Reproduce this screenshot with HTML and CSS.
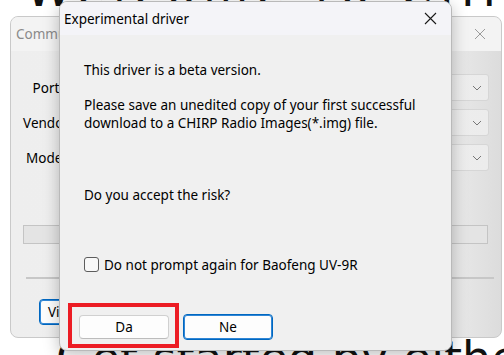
FILE: index.html
```html
<!DOCTYPE html>
<html lang="en">
<head>
  <meta charset="UTF-8" />
  <meta name="viewport" content="width=device-width, initial-scale=1" />
  <title>Experimental driver</title>
  <link rel="stylesheet" href="styles.css">
</head>
<body>
  <div class="page-text page-top">Welcome to CHIRP</div>
  <div class="page-text page-bottom">Get started by either:</div>

  <div class="window main-window">
    <div class="titlebar">
      <span class="title">Communications</span>
      <svg class="close" width="12" height="12" viewBox="0 0 12 12"><path d="M1 1L11 11M11 1L1 11" stroke="#9a9a9a" stroke-width="1"/></svg>
    </div>
    <div class="main-body">
      <div class="form-row"><label>Port</label><div class="combo"><svg width="10" height="6" viewBox="0 0 10 6"><path d="M1 1L5 5L9 1" fill="none" stroke="#777" stroke-width="1"/></svg></div></div>
      <div class="form-row"><label>Vendor</label><div class="combo"><svg width="10" height="6" viewBox="0 0 10 6"><path d="M1 1L5 5L9 1" fill="none" stroke="#777" stroke-width="1"/></svg></div></div>
      <div class="form-row"><label>Model</label><div class="combo"><svg width="10" height="6" viewBox="0 0 10 6"><path d="M1 1L5 5L9 1" fill="none" stroke="#777" stroke-width="1"/></svg></div></div>
      <div class="progress"></div>
      <div class="separator"></div>
      <div class="main-buttons"><button class="btn btn-default">View</button></div>
    </div>
  </div>

  <div class="window dialog">
    <div class="titlebar dialog-titlebar">
      <span class="title">Experimental driver</span>
      <svg class="close" width="13" height="13" viewBox="0 0 13 13"><path d="M1 1L12 12M12 1L1 12" stroke="#1a1a1a" stroke-width="1.1"/></svg>
    </div>
    <div class="dialog-body">
      <p>This driver is a beta version.</p>
      <p>Please save an unedited copy of your first successful<br>download to a CHIRP Radio Images(*.img) file.</p>
      <p class="question">Do you accept the risk?</p>
      <label class="check"><span class="box"></span>Do not prompt again for Baofeng UV-9R</label>
      <div class="dialog-buttons">
        <button class="btn">Da</button>
        <button class="btn btn-default">Ne</button>
      </div>
    </div>
  </div>

  <div class="highlight"></div>
</body>
</html>
```

FILE: styles.css
```css
body { margin: 0; width: 504px; height: 355px; overflow: hidden; position: relative; background: #fff; font-family: "Noto Sans", sans-serif; font-size: 13.5px; color: #000; }

.page-text { position: absolute; font-family: "DejaVu Sans", sans-serif; font-size: 46px; color: #111; white-space: nowrap; }
.page-top { left: 26px; top: -37px; letter-spacing: 8px; }
.page-bottom { left: 56px; top: 331px; letter-spacing: 0; }

.window { position: absolute; box-sizing: border-box; border-radius: 8px; overflow: hidden; }
.titlebar { display: flex; align-items: center; justify-content: space-between; }
.title { white-space: nowrap; }

.main-window { left: 10px; top: 16px; width: 492px; height: 322px; border: 1px solid #c9c9c9; background: linear-gradient(90deg, #eeeeee 0%, #f0f0f0 85%, #dcdcdc 100%); }
.main-window .titlebar { height: 34px; padding: 0 15px 0 5px; background: #f3f3f3; }
.main-window .title { color: #8a8a8a; }
.main-body { padding: 23px 12px 0 10px; }
.form-row { display: flex; align-items: center; gap: 8px; margin-bottom: 8px; }
.form-row label { width: 50px; text-align: center; }
.combo { flex: 1; height: 27px; box-sizing: border-box; border: 1px solid #d6d6d6; border-radius: 3px; background: linear-gradient(90deg, #f6f6f6, #ececec); display: flex; align-items: center; justify-content: flex-end; padding-right: 6px; }
.progress { margin: 54px 1px 0 2px; height: 19px; box-sizing: border-box; border: 1px solid #c4c4c4; background: #e4e4e4; }
.separator { margin: 33px -5px 0 5px; height: 2px; background: #c7c7c7; }
.main-buttons { padding: 20px 0 0 18px; }

.dialog { left: 59px; top: 1px; width: 393px; height: 350px; border: 1px solid #b9b9b9; background: #f0f0f0; box-shadow: 0 4px 16px rgba(0,0,0,0.25); }
.dialog-titlebar { height: 33px; padding: 0 14px 0 4px; background: #f4f4f8; }
.dialog-body { padding: 27px 24px 0 24px; }
.dialog-body p { margin: 0 0 17.5px; line-height: 17.5px; }
.dialog-body .question { margin: 55px 0 0; }
.check { display: flex; align-items: center; gap: 5px; margin: 51px 0 0; line-height: 18px; }
.box { width: 15px; height: 15px; box-sizing: border-box; border: 1px solid #5c5c5c; border-radius: 3px; background: #f8f8f8; }
.dialog-buttons { display: flex; align-items: center; gap: 14px; margin: 40px 0 0 -5px; }

.btn { font-family: "Noto Sans", sans-serif; font-size: 13.5px; color: #000; width: 90px; height: 24px; box-sizing: border-box; border: 1px solid #d0d0d0; border-bottom-color: #bcbcbc; border-radius: 4px; background: #fdfdfd; padding: 0; }
.btn-default { height: 26px; border: 1px solid #0067c0; box-shadow: inset 0 0 0 1px #2f86d6; }
.main-buttons .btn { width: 76px; height: 26px; text-align: left; padding-left: 8px; }

.highlight { position: absolute; left: 68px; top: 303px; width: 111px; height: 45px; box-sizing: border-box; border: 4px solid #ec1c24; }
```
